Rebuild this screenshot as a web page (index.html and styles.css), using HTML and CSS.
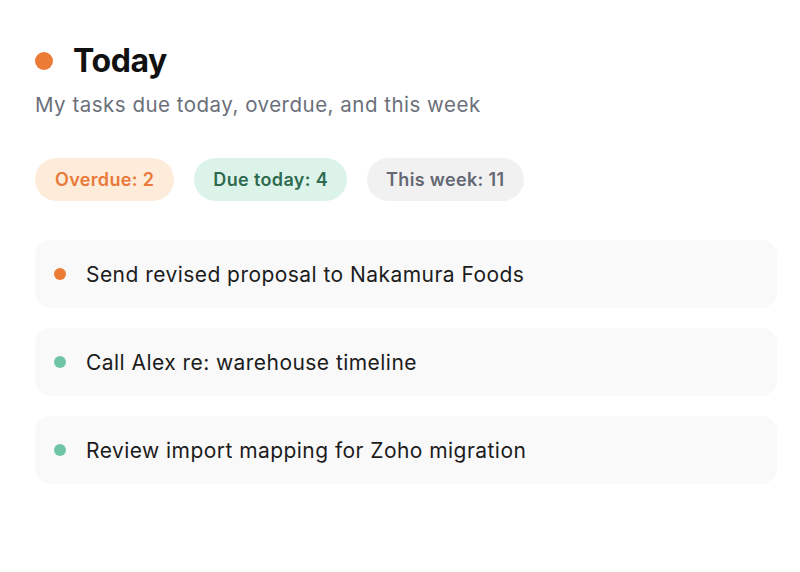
FILE: index.html
```html
<!DOCTYPE html>
<html>
<head>
<meta charset="utf-8">
<link rel="stylesheet" href="styles.css">
</head>
<body>
<main class="panel">
  <header class="head">
    <h1 class="title"><span class="title-dot"></span>Today</h1>
    <p class="subtitle">My tasks due today, overdue, and this week</p>
  </header>
  <div class="pills">
    <span class="pill pill-overdue">Overdue: 2</span>
    <span class="pill pill-today">Due today: 4</span>
    <span class="pill pill-week">This week: 11</span>
  </div>
  <ul class="tasks">
    <li class="task"><span class="dot dot-orange"></span>Send revised proposal to Nakamura Foods</li>
    <li class="task"><span class="dot dot-green"></span>Call Alex re: warehouse timeline</li>
    <li class="task"><span class="dot dot-green"></span>Review import mapping for Zoho migration</li>
  </ul>
</main>
</body>
</html>
```
FILE: styles.css
```css
* { box-sizing: border-box; }
html, body { margin: 0; padding: 0; background: #ffffff; }
body { font-family: Inter, "Open Sans", sans-serif; color: #1a1a1a; }
.panel { padding: 40px 23px 0 35px; }
.head { margin: 0; }
.title {
  display: flex; align-items: center; gap: 20px;
  margin: 0; font-size: 32px; font-weight: 700; line-height: 42px;
  color: #111111; letter-spacing: -0.4px;
}
.title-dot { width: 18px; height: 18px; border-radius: 50%; background: #ec7b35; flex: none; }
.subtitle { margin: 9px 0 0; font-size: 20.5px; line-height: 28px; color: #6b6f7a; font-weight: 400; letter-spacing: 0.5px; }
.pills { display: flex; gap: 20px; margin-top: 39px; }
.pill {
  display: inline-flex; align-items: center; height: 43px; padding: 0 19px;
  border-radius: 22px; font-size: 18px; font-weight: 600; letter-spacing: 0.35px;
}
.pill-overdue { background: #fdecd9; color: #e8793a; padding: 0 20px; }
.pill-today { background: #dcf3ea; color: #2e6a4f; }
.pill-week { background: #f1f1f2; color: #646873; }
.tasks { list-style: none; margin: 39px 0 0; padding: 0; display: flex; flex-direction: column; gap: 20px; }
.task {
  display: flex; align-items: center; gap: 20px; height: 68px; padding: 0 19px;
  background: #f9f9f9; border-radius: 16px; font-size: 21px; color: #1c1c1c; letter-spacing: 0.45px;
}
.dot { width: 12px; height: 12px; border-radius: 50%; flex: none; }
.dot-orange { background: #ec7b35; }
.dot-green { background: #6fc4a5; }
```
